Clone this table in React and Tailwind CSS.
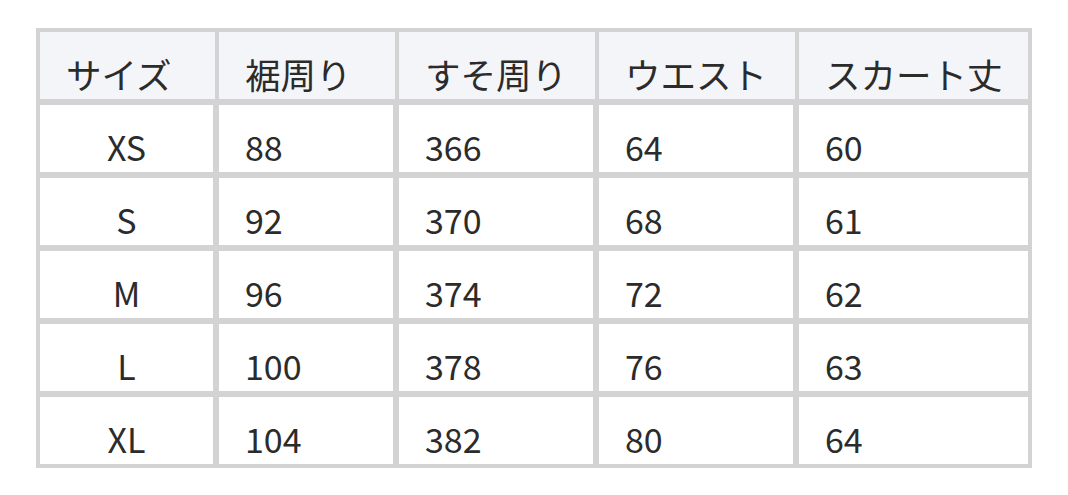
import React from 'react';

const headers = ['サイズ', '裾周り', 'すそ周り', 'ウエスト', 'スカート丈'];

const rows = [
  ['XS', '88', '366', '64', '60'],
  ['S', '92', '370', '68', '61'],
  ['M', '96', '374', '72', '62'],
  ['L', '100', '378', '76', '63'],
  ['XL', '104', '382', '80', '64'],
];

const App = () => {
  return (
    <div className="w-[1068px] h-[495px] bg-white pt-[28px] pl-[36px] font-['Noto_Sans_CJK_JP','Noto_Sans',sans-serif] text-[34px] text-[#2b2b2b]">
      {/* Size table */}
      <div className="w-[996px] bg-[#d3d3d3] p-[4px] flex flex-col gap-[6px]">
        <div className="grid grid-cols-[175px_176px_196px_196px_229px] gap-[4px]">
          {headers.map((h) => (
            <div key={h} className="h-[67px] bg-[#f4f5f9] flex items-end pl-[26px] pb-[1px] whitespace-nowrap text-[35.5px] leading-[48px]">
              {h}
            </div>
          ))}
        </div>
        {rows.map((row) => (
          <div key={row[0]} className="grid grid-cols-[173px_174px_194px_194px_229px] gap-[6px]">
            {row.map((cell, i) => (
              <div
                key={i}
                className={
                  i === 0
                    ? 'h-[67px] bg-white flex items-end justify-center'
                    : 'h-[67px] bg-white flex items-end pl-[26px]'
                }
              >
                {cell}
              </div>
            ))}
          </div>
        ))}
      </div>
    </div>
  );
};

export default App;
